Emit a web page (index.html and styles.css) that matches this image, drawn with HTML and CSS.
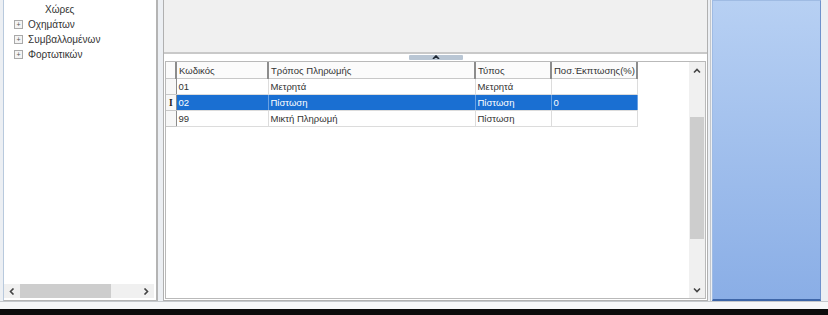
FILE: index.html
```html
<!DOCTYPE html>
<html lang="el">
<head>
    <meta charset="UTF-8">
    <title>Τρόποι Πληρωμής</title>
    <link rel="stylesheet" href="styles.css">
</head>
<body>
    <div class="screen">
        <div class="workspace">
            <!-- Tree on the left -->
            <div class="tree-panel">
                <ul class="tree">
                    <li class="leaf">Χώρες</li>
                    <li><span class="plus">+</span>Οχημάτων</li>
                    <li><span class="plus">+</span>Συμβαλλομένων</li>
                    <li><span class="plus">+</span>Φορτωτικών</li>
                </ul>
                <div class="hscroll">
                    <span class="arrow"><svg width="6" height="7" viewBox="0 0 6 7"><path d="M4.5 0.5 L1.5 3.5 L4.5 6.5" fill="none" stroke="#444" stroke-width="1.6"/></svg></span>
                    <div class="htrack"><div class="hthumb"></div></div>
                    <span class="arrow"><svg width="6" height="7" viewBox="0 0 6 7"><path d="M1.5 0.5 L4.5 3.5 L1.5 6.5" fill="none" stroke="#444" stroke-width="1.6"/></svg></span>
                </div>
            </div>

            <!-- Main area -->
            <div class="content">
                <div class="top-area"></div>
                <div class="splitter">
                    <div class="handle"><svg width="8" height="4" viewBox="0 0 8 4"><path d="M1 4 L4 1 L7 4" fill="none" stroke="#1d2733" stroke-width="1.6"/></svg></div>
                </div>
                <div class="grid-box">
                    <table class="grid">
                        <colgroup>
                            <col class="c-rh"><col class="c-code"><col class="c-name"><col class="c-type"><col class="c-disc">
                        </colgroup>
                        <tr class="head">
                            <th class="rh"></th>
                            <th>Κωδικός</th>
                            <th>Τρόπος Πληρωμής</th>
                            <th>Τύπος</th>
                            <th>Ποσ.Έκπτωσης(%)</th>
                        </tr>
                        <tr>
                            <td class="rh"></td>
                            <td>01</td>
                            <td>Μετρητά</td>
                            <td>Μετρητά</td>
                            <td></td>
                        </tr>
                        <tr class="selected">
                            <td class="rh">I</td>
                            <td>02</td>
                            <td>Πίστωση</td>
                            <td>Πίστωση</td>
                            <td>0</td>
                        </tr>
                        <tr>
                            <td class="rh"></td>
                            <td>99</td>
                            <td>Μικτή Πληρωμή</td>
                            <td>Πίστωση</td>
                            <td></td>
                        </tr>
                    </table>
                    <div class="vscroll">
                        <span class="arrow"><svg width="8" height="6" viewBox="0 0 8 6"><path d="M1 4.5 L4 1.5 L7 4.5" fill="none" stroke="#444" stroke-width="1.6"/></svg></span>
                        <div class="vtrack"><div class="vthumb"></div></div>
                        <span class="arrow"><svg width="8" height="6" viewBox="0 0 8 6"><path d="M1 1.5 L4 4.5 L7 1.5" fill="none" stroke="#444" stroke-width="1.6"/></svg></span>
                    </div>
                </div>
            </div>

            <!-- Blue side panel -->
            <div class="side-wrap">
                <div class="side"></div>
            </div>
        </div>
        <div class="bottom-gap"></div>
        <div class="bottom-bar"></div>
    </div>
</body>
</html>
```

FILE: styles.css
```css
body {
    margin: 0;
    font-family: "Liberation Sans", Arial, sans-serif;
    background-color: #eef1f5;
}
.screen {
    width: 828px;
    height: 315px;
    display: flex;
    flex-direction: column;
    overflow: hidden;
}
.workspace {
    height: 301px;
    display: flex;
    padding-left: 3px;
    background-color: #eceff3;
    border-bottom: 1px solid #c4c8cc;
}

/* tree */
.tree-panel {
    width: 152px;
    display: flex;
    flex-direction: column;
    background-color: #fff;
    border-left: 1px solid #b8c9dd;
    border-right: 2px solid #b4b4b4;
    border-bottom: 1px solid #b4b4b4;
}
.tree {
    flex: 1;
    list-style: none;
    margin: 2px 0 0 0;
    padding: 0 0 0 10px;
    font-size: 10px;
    color: #333;
}
.tree li {
    height: 15px;
    line-height: 15px;
    display: flex;
    align-items: center;
    white-space: nowrap;
}
.tree li.leaf {
    padding-left: 31px;
}
.plus {
    width: 7px;
    height: 7px;
    border: 1px solid #a9a9a9;
    margin-right: 5px;
    font-size: 7px;
    line-height: 7px;
    text-align: center;
    color: #555;
    background-color: #f4f4f4;
}
.hscroll {
    height: 14px;
    margin: 0 2px 2px 0;
    display: flex;
    align-items: center;
    background-color: #f0f0f0;
}
.hscroll .arrow {
    width: 16px;
    height: 14px;
    display: flex;
    align-items: center;
    justify-content: center;
}
.htrack {
    flex: 1;
    height: 100%;
}
.hthumb {
    width: 91px;
    height: 100%;
    background-color: #cdcdcd;
}

/* main content */
.content {
    width: 543px;
    margin-left: 5px;
    display: flex;
    flex-direction: column;
    background-color: #fff;
    border-left: 1px solid #b0b0b0;
    border-right: 1px solid #b0b0b0;
    border-bottom: 1px solid #b0b0b0;
}
.top-area {
    height: 52px;
    background-color: #f0f0f0;
    border-bottom: 2px solid #c9c9c9;
}
.splitter {
    height: 7px;
    display: flex;
    justify-content: center;
}
.handle {
    width: 54px;
    height: 5px;
    margin-top: 1px;
    display: flex;
    justify-content: center;
    align-items: flex-start;
    background-color: #b9c6d4;
    border-radius: 1px;
}
.grid-box {
    flex: 1;
    display: flex;
    margin: 0 1px 1px 1px;
    border: 1px solid #b9b9b9;
}
.grid {
    table-layout: fixed;
    border-collapse: collapse;
    width: 471px;
    align-self: flex-start;
    font-size: 9.5px;
    color: #333;
}
.c-rh { width: 10px; }
.c-code { width: 92px; }
.c-name { width: 207px; }
.c-type { width: 76px; }
.c-disc { width: 86px; }
.grid th, .grid td {
    height: 15px;
    padding: 0 0 0 2px;
    text-align: left;
    font-weight: normal;
    white-space: nowrap;
    overflow: hidden;
    border-right: 1px solid #dcdcdc;
    border-bottom: 1px solid #dcdcdc;
}
.grid .head th {
    height: 16px;
    border-right: 2px solid #8c8c8c;
    border-bottom: 1px solid #c8c8c8;
    background-color: #fbfbfb;
}
.grid .rh {
    padding: 0;
    background-color: #f7f7f7;
    border-right: 1px solid #8c8c8c;
    border-bottom: 1px solid #c8c8c8;
    text-align: center;
    font-family: "Liberation Serif", serif;
    font-weight: bold;
    color: #222;
}
.grid .selected td {
    background-color: #1a6fd2;
    color: #fff;
    border-right-color: #6aa1e2;
}
.grid .selected td.rh {
    background-color: #f7f7f7;
    color: #222;
    border-right-color: #8c8c8c;
}
.vscroll {
    margin-left: auto;
    width: 16px;
    display: flex;
    flex-direction: column;
    background-color: #f0f0f0;
}
.vscroll .arrow {
    height: 17px;
    display: flex;
    align-items: center;
    justify-content: center;
}
.vtrack {
    flex: 1;
    padding-top: 38px;
}
.vthumb {
    height: 122px;
    margin: 0 1px;
    background-color: #cdcdcd;
}

/* blue panel */
.side-wrap {
    margin-left: 2px;
    width: 112px;
    border-left: 1px solid #c3c7cc;
    padding-left: 1px;
    display: flex;
}
.side {
    width: 107px;
    background: linear-gradient(#b7d0f3, #8aaee6);
    border: 1px solid #9fbbe3;
    border-bottom: 2px solid #3e66a8;
    border-right: 1px solid #6e92cc;
}
.bottom-gap {
    height: 7px;
    background-color: #f6f7f8;
}
.bottom-bar {
    flex: 1;
    background-color: #0c0c0c;
}
```
